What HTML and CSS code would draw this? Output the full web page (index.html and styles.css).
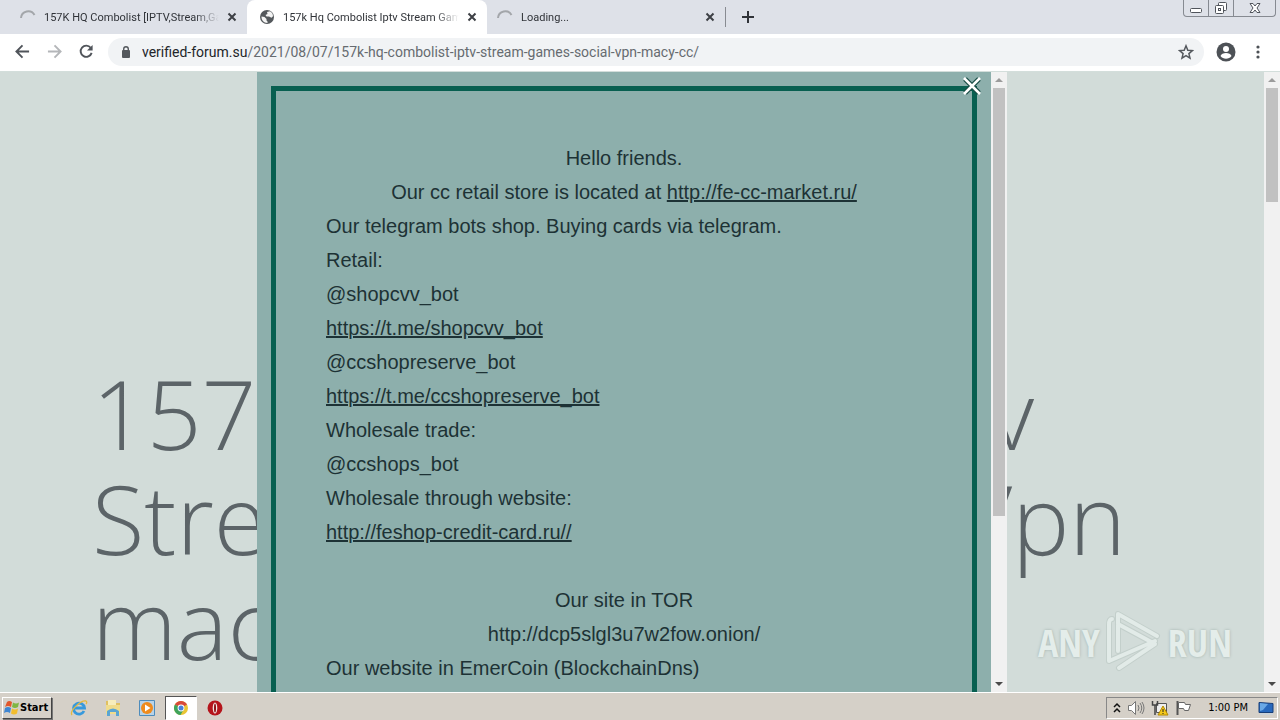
FILE: index.html
```html
<!DOCTYPE html>
<html lang="en">
<head>
<meta charset="utf-8">
<title>157k Hq Combolist Iptv Stream Games</title>
<link rel="stylesheet" href="styles.css">
</head>
<body>
<header class="tabstrip">
  <div class="tab">
    <svg class="fav" viewBox="0 0 16 16"><path class="spin" d="M1 9A7.200 7.200 0 0 1 14.500 6"/></svg>
    <span class="tab-title">157K HQ Combolist [IPTV,Stream,Ga</span>
    <button class="tab-close" aria-label="Close tab"><svg viewBox="0 0 10 10"><path d="M1.500 1.500l7 7M8.500 1.500l-7 7"/></svg></button>
  </div>
  <div class="tab tab-active">
    <svg class="fav" viewBox="0 0 16 16"><circle cx="8" cy="8" r="7" fill="#54585c"/><path d="M2.500 7.500l3 .5 2 2v1.500l1 1v1.500C4.500 14 2.300 11 2.500 7.500zM8 3l3-.8c2 1 3 2.800 3 5l-1.500 1.500-2.500-1.200H7.500L6.500 6 8.500 5z" fill="#f4f4f4"/></svg>
    <span class="tab-title">157k Hq Combolist Iptv Stream Game</span>
    <button class="tab-close" aria-label="Close tab"><svg viewBox="0 0 10 10"><path d="M1.500 1.500l7 7M8.500 1.500l-7 7"/></svg></button>
  </div>
  <div class="tab tab-loading">
    <svg class="fav" viewBox="0 0 16 16"><path class="spin" d="M1 9A7.200 7.200 0 0 1 14.500 6"/></svg>
    <span class="tab-title">Loading...</span>
    <button class="tab-close" aria-label="Close tab"><svg viewBox="0 0 10 10"><path d="M1.500 1.500l7 7M8.500 1.500l-7 7"/></svg></button>
  </div>
  <span class="tab-rule"></span>
  <button class="new-tab" aria-label="New tab"><svg viewBox="0 0 12 12"><path d="M6 0v12M0 6h12"/></svg></button>
  <div class="window-buttons">
    <button class="wb" aria-label="Minimize"><svg width="14" height="16" viewBox="0 0 14 16"><rect x="1.500" y="8.500" width="11" height="4" rx="1"/></svg></button>
    <button class="wb" aria-label="Restore"><svg width="14" height="16" viewBox="0 0 14 16"><rect x="4.500" y="2.500" width="8" height="8" rx="1"/><rect x="1.500" y="5.500" width="8" height="8" rx="1"/><rect x="4.500" y="8.500" width="2" height="2"/></svg></button>
    <button class="wb wb-close" aria-label="Close"><svg width="14" height="16" viewBox="0 0 14 16"><path d="M2 3.500h3L7 6l2-2.500h3L9 8l3 4.500H9L7 10l-2 2.500H2L5 8z"/></svg></button>
  </div>
</header>
<nav class="toolbar">
  <button class="nav-btn" aria-label="Back"><svg viewBox="0 0 16 16"><path d="M15 8H2M8 1.500L1.500 8 8 14.500"/></svg></button>
  <button class="nav-btn nav-off" aria-label="Forward"><svg viewBox="0 0 16 16"><path d="M1 8h13M8 1.500L14.500 8 8 14.500"/></svg></button>
  <button class="nav-btn" aria-label="Reload"><svg viewBox="0 0 16 16"><path d="M13.500 9.500A6 6 0 1 1 12.500 4"/><path d="M14.500 1v6h-6z" fill="#50545a" stroke="none"/></svg></button>
  <div class="omnibox">
    <svg class="lock" viewBox="0 0 10 14"><rect x="1" y="5" width="8" height="8" rx="1" fill="#54585d"/><path d="M2.700 6V4a2.300 2.300 0 0 1 4.600 0v2" fill="none" stroke="#54585d" stroke-width="1.400"/></svg>
    <span class="url"><b>verified-forum.su</b>/2021/08/07/157k-hq-combolist-iptv-stream-games-social-vpn-macy-cc/</span>
    <button class="star" aria-label="Bookmark this page"><svg viewBox="0 0 16 16"><path d="M8 1.800l1.800 4.400 4.600.4-3.500 3 1.100 4.600L8 11.700l-4 2.500 1.100-4.600-3.500-3 4.600-.4z"/></svg></button>
  </div>
  <button class="round" aria-label="Profile"><svg width="20" height="20" viewBox="0 0 20 20"><circle cx="10" cy="10" r="9.500" fill="#4d5156"/><circle cx="10" cy="7" r="3" fill="#fff"/><path d="M4.500 14c1-4 10-4 11 0-2.500 3.500-8.500 3.500-11 0z" fill="#fff"/></svg></button>
  <button class="round" aria-label="Menu"><svg width="4" height="16" viewBox="0 0 4 16" fill="#4d5156"><circle cx="2" cy="3" r="1.600"/><circle cx="2" cy="8" r="1.600"/><circle cx="2" cy="13" r="1.600"/></svg></button>
</nav>
<div class="viewport">
  <main class="page">
    <h1 class="headline">
      <span class="line line-first"><span>157k</span> <span>Iptv</span></span>
      <span class="line"><span>Stream</span> <span>Vpn</span></span>
      <span class="line">macy</span>
    </h1>
  </main>
  <div class="scrollbar"><i class="arrow arrow-up"></i><i class="thumb thumb-page"></i><i class="arrow arrow-down"></i></div>
  <section class="popup">
    <div class="popup-body">
      <div class="notice">
        <p class="mid">Hello friends.</p>
        <p class="mid">Our cc retail store is located at <a href="#">http://fe-cc-market.ru/</a></p>
        <p>Our telegram bots shop. Buying cards via telegram.</p>
        <p>Retail:</p>
        <p>@shopcvv_bot</p>
        <p><a href="#">https://t.me/shopcvv_bot</a></p>
        <p>@ccshopreserve_bot</p>
        <p><a href="#">https://t.me/ccshopreserve_bot</a></p>
        <p>Wholesale trade:</p>
        <p>@ccshops_bot</p>
        <p>Wholesale through website:</p>
        <p><a href="#">http://feshop-credit-card.ru//</a></p>
        <p>&nbsp;</p>
        <p class="mid">Our site in TOR</p>
        <p class="mid">http://dcp5slgl3u7w2fow.onion/</p>
        <p>Our website in EmerCoin (BlockchainDns)</p>
      </div>
    </div>
    <div class="scrollbar"><i class="arrow arrow-up"></i><i class="thumb thumb-popup"></i><i class="arrow arrow-down"></i></div>
    <button class="popup-close" aria-label="Close"><svg viewBox="0 0 20 20"><path d="M3 3l14 14M17 3L3 17" stroke="#174b44" stroke-width="5"/><path d="M2 2l16 16M18 2L2 18" stroke="#fff" stroke-width="2.500"/></svg></button>
  </section>
  <div class="watermark">
    <span>ANY</span>
    <svg viewBox="0 0 56 64"><g fill="none" stroke-linecap="round" stroke-linejoin="round"><path stroke="#c3cfcb" stroke-width="6" d="M6 9C3 9 3 12 3 15V51L49 31M12 41V4L51 26M12 14L49 34L13 58"/><path stroke="#e2ebe8" stroke-width="4" d="M6 9C3 9 3 12 3 15V51L49 31M12 41V4L51 26M12 14L49 34L13 58"/></g></svg>
    <span>RUN</span>
  </div>
</div>
<footer class="taskbar">
  <button class="start"><svg width="16" height="16" viewBox="0 0 16 16"><path d="M3 2q2-2 5 0L7 7Q4 5 1 7z" fill="#e2572b"/><path d="M9 2.500q3 2 6 0L14 7q-3 2-6 0z" fill="#7fb643"/><path d="M1 8q3-2 6 0l-1 5q-3-2-6 0z" fill="#3f86d2"/><path d="M8 8.500q3 2 6 0l-1 5q-3 2-6 0z" fill="#f2bd2e"/></svg>Start</button>
  <div class="launch">
    <button aria-label="Internet Explorer"><svg viewBox="0 0 18 18"><path d="M14 12A5.500 5.500 0 1 1 14.500 9H5" fill="none" stroke="#3799dc" stroke-width="2.800"/><path d="M2 16C-1 12 11 1 16 2c1 .3 1 2 0 3" fill="none" stroke="#e4b93e" stroke-width="1.300"/></svg></button>
    <button aria-label="Explorer"><svg viewBox="0 0 18 18"><path d="M2 2h5l1 2h8v11H2z" fill="#e0c060"/><path d="M4 1h8v6H4z" fill="#f7edbc"/><path d="M2 6h14v9H2z" fill="#f0dc8c"/><path d="M3 17v-5q6-5 12 0v5h-3v-4H6v4z" fill="#5aa5d2"/></svg></button>
    <button aria-label="Media Player"><svg viewBox="0 0 18 18"><path d="M1.500 1.500h15v15h-15z" fill="#b8d3e8" stroke="#4e8cbc"/><circle cx="9" cy="9" r="6" fill="#ef8b1d"/><path d="M7 5.500l5.500 3.500L7 12.500z" fill="#fff"/></svg></button>
    <button class="pressed" aria-label="Chrome"><svg viewBox="0 0 18 18"><circle cx="9" cy="9" r="7" fill="#e9c534"/><path d="M9 9L2.900 5.500A7 7 0 0 1 15 5.500z" fill="#d8493a"/><path d="M9 9L2.900 5.500A7 7 0 0 0 8.500 16L12 10z" fill="#3fa35b"/><circle cx="9" cy="9" r="3.400" fill="#fff"/><circle cx="9" cy="9" r="2.500" fill="#4a80d8"/></svg></button>
    <button aria-label="Opera"><svg viewBox="0 0 18 18"><circle cx="9" cy="9" r="7.500" fill="#b5141b"/><ellipse cx="9" cy="9" rx="2.300" ry="5.500" fill="#f3e8e5"/><ellipse cx="9" cy="9" rx="1" ry="4.500" fill="#8c1015"/></svg></button>
  </div>
  <div class="tray">
    <svg width="8" height="12" viewBox="0 0 8 12" fill="none" stroke="#111" stroke-width="1.500"><path d="M1 5l3-3 3 3M1 10l3-3 3 3"/></svg>
    <svg width="18" height="16" viewBox="0 0 18 16" fill="none" stroke="#777"><path d="M1.500 5.500h3l4-4v13l-4-4h-3z" fill="#fff"/><path d="M11 5q2 3 0 6M13 3q3.500 5 0 10M15 2q4 6 0 12"/></svg>
    <svg width="18" height="16" viewBox="0 0 18 16"><path d="M5.500 3.500h10v9h-10z" fill="#eee" stroke="#555"/><path d="M1.500 1v4h5V1M4 5v10" fill="none" stroke="#444" stroke-width="1.500"/><path d="M12 6l5 9H7z" fill="#f5c91b" stroke="#b58a00"/><path d="M12 9v3M12 13v1" stroke="#222"/></svg>
    <svg width="18" height="16" viewBox="0 0 18 16"><path d="M2.500 1v14" stroke="#555" stroke-width="2"/><path d="M3.500 2.500h6l1 2h5l-2 6h-4l-1-2h-5z" fill="#fff" stroke="#666"/></svg>
    <time>1:00 PM</time>
    <svg width="16" height="16" viewBox="0 0 16 16"><path d="M1 2.500l14 1v9H1z" fill="#2869bd" stroke="#173e78"/><path d="M2 3l8 1-5 6-3 1z" fill="#6aa9e6"/><path d="M2 14h13" stroke="#c4d4e5"/></svg>
  </div>
</footer>
</body>
</html>
```
FILE: styles.css
```css
* { box-sizing: border-box; }
body {
  margin: 0;
  height: 100vh;
  display: flex;
  flex-direction: column;
  overflow: hidden;
  font-family: "Liberation Sans", sans-serif;
  background: #d2dcd9;
}
button { border: 0; padding: 0; background: none; font: inherit; color: inherit; display: flex; align-items: center; justify-content: center; }
svg { display: block; flex: none; }
p, h1 { margin: 0; }

.tabstrip { display: flex; align-items: center; height: 34px; flex: none; background: #dee1e8; color: #303338; }
.tab { display: flex; align-items: center; gap: 8px; width: 238px; height: 34px; padding: 0 10px 0 20px; font: 11px Roboto, sans-serif; }
.tab:first-child { width: 247px; }
.tab-active { width: 240px; padding-left: 12px; background: #fff; border-radius: 8px 8px 0 0; }
.tab-loading { padding-left: 10px; }
.fav { width: 16px; height: 16px; }
.spin { fill: none; stroke: #a3a6aa; stroke-width: 2; }
.tab-title { flex: 1; min-width: 0; overflow: hidden; white-space: nowrap; mask-image: linear-gradient(to right, #000 86%, transparent); }
.tab-close svg { width: 10px; height: 10px; stroke: #3d4045; stroke-width: 2; }
.tab-rule { width: 1px; height: 20px; background: #888b91; }
.new-tab { width: 44px; height: 34px; }
.new-tab svg { width: 12px; height: 12px; stroke: #303338; stroke-width: 2; }
.window-buttons { display: flex; align-self: flex-start; height: 17px; margin: 0 4px 0 auto; border: 1px solid #868a91; border-top: 0; border-radius: 0 0 4px 4px; }
.wb { width: 25px; height: 16px; border-right: 1px solid #868a91; }
.wb-close { width: 41px; border: 0; }
.wb svg { fill: #fff; stroke: #50545b; }

.toolbar { display: flex; align-items: center; height: 38px; flex: none; padding: 0 12px 2px 6px; background: #fff; border-bottom: 1px solid #d3dedb; }
.nav-btn { width: 32px; height: 32px; }
.nav-btn svg { width: 15px; height: 15px; fill: none; stroke: #50545a; stroke-width: 2; }
.nav-off svg { stroke: #b4b6b9; }
.omnibox { flex: 1; min-width: 0; display: flex; align-items: center; height: 28px; margin-left: 6px; padding: 0 10px 0 13px; border-radius: 14px; background: #f1f3f5; color: #666b70; }
.lock { width: 10px; height: 14px; }
.url { flex: 1; margin-left: 11px; font: 14px Roboto, sans-serif; white-space: nowrap; overflow: hidden; }
.url b { font-weight: 400; color: #222529; }
.star svg { width: 16px; height: 16px; fill: none; stroke: #54585d; stroke-width: 1.500; }
.round { width: 20px; height: 28px; margin-left: 12px; }

.viewport { position: relative; flex: 1; min-height: 0; display: flex; overflow: hidden; }
.page { flex: 1; min-width: 0; padding: 288px 138px 0 92px; }
.headline { font: 300 96px/105px "Open Sans", sans-serif; color: #5c6468; }
.line { display: flex; justify-content: space-between; white-space: nowrap; }
.line-first { padding-right: 92px; }
.scrollbar { width: 16px; flex: none; display: flex; flex-direction: column; align-items: center; background: #f1f1f1; }
.arrow { width: 16px; height: 16px; flex: none; display: flex; align-items: center; justify-content: center; }
.arrow::before { content: ""; border: 4px solid transparent; }
.arrow-up::before { border-bottom-color: #9b9b9b; border-top: 0; }
.arrow-down { margin-top: auto; }
.arrow-down::before { border-top-color: #4a4a4a; border-bottom: 0; }
.thumb { width: 12px; background: #c1c1c1; }
.thumb-page { height: 114px; }
.thumb-popup { height: 69%; }

.popup { position: absolute; top: 0; bottom: 0; left: 0; right: 16px; width: 750px; margin: 0 auto; display: flex; background: #8dafac; }
.popup-body { flex: 1; min-width: 0; padding: 14px 14px 0; overflow: hidden; }
.notice { min-height: 720px; padding: 50px; border: 5px solid #075f50; font-size: 20px; line-height: 34px; color: #1d3235; }
.mid { text-align: center; }
.notice a { color: inherit; text-decoration: underline; }
.popup-close { position: absolute; top: 4px; right: 25px; width: 20px; height: 20px; }
.popup-close svg { width: 20px; height: 20px; }

.watermark { position: absolute; right: 48px; bottom: 18px; display: flex; align-items: center; gap: 6px; color: #e4edea; font: 38px/64px "Open Sans Condensed", sans-serif; text-shadow: 0 0 3px #9fb0ab; }
.watermark svg { width: 56px; height: 64px; }

.taskbar { display: flex; align-items: center; height: 28px; flex: none; padding: 2px 2px 0 2px; background: #d5d0c8; border-top: 1px solid #fff; color: #000; font: 11px "DejaVu Sans Condensed", "DejaVu Sans", sans-serif; }
.start { height: 22px; padding: 0 3px 0 1px; font-weight: 700; border: 1px solid; border-color: #fff #444 #444 #fff; box-shadow: 1px 1px 0 #777; }
.launch { display: flex; margin-left: 11px; gap: 2px; }
.launch button { width: 32px; height: 24px; }
.launch svg { width: 18px; height: 18px; }
.launch .pressed { background: #fff; border: 1px solid; border-color: #555 #fff #fff #555; }
.tray { display: flex; align-items: center; height: 22px; margin-left: auto; padding: 0 3px 0 6px; gap: 6px; border: 1px solid; border-color: #888 #fff #fff #888; }
.tray time { margin: 0 4px 0 9px; }
```
